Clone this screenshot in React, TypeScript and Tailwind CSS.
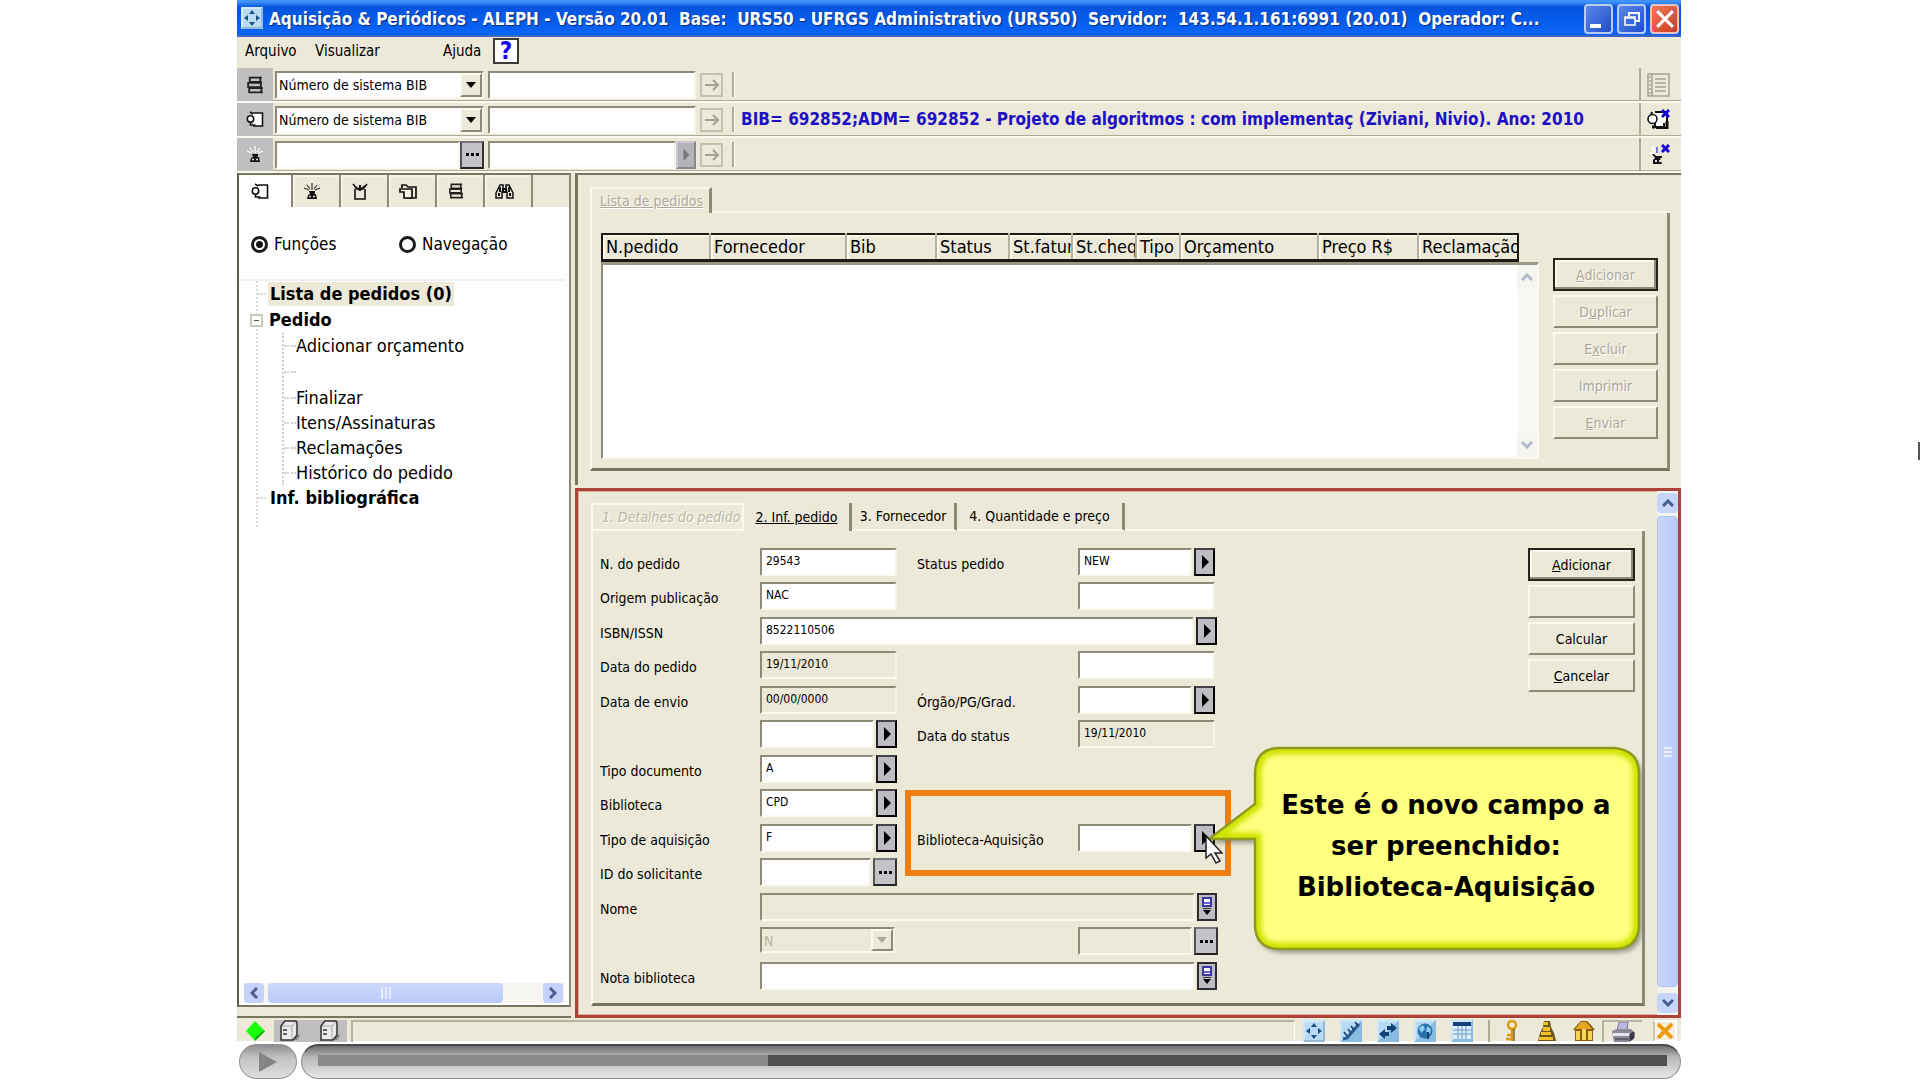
import { ReactNode } from "react";

const SUNKEN =
  "border-2 border-t-[#8d8a78] border-l-[#8d8a78] border-r-[#f6f4e6] border-b-[#fbfaf0]";
const RAISED =
  "border-2 border-t-[#fbfaee] border-l-[#fbfaee] border-r-[#8d8a78] border-b-[#8d8a78]";

const COLUMNS = [
  { name: "N.pedido", width: "w-[108px]" },
  { name: "Fornecedor", width: "w-[136px]" },
  { name: "Bib", width: "w-[90px]" },
  { name: "Status", width: "w-[73px]" },
  { name: "St.fatura", width: "w-[63px]" },
  { name: "St.cheque", width: "w-[64px]" },
  { name: "Tipo", width: "w-[44px]" },
  { name: "Orçamento", width: "w-[138px]" },
  { name: "Preço R$", width: "w-[100px]" },
  { name: "Reclamação", width: "w-[100px]" },
];

type IconProps = { className?: string };

function OrderIcon({ className = "h-[17px] w-[18px]" }: IconProps) {
  return (
    <svg viewBox="0 0 18 17" className={className} fill="none" stroke="#111" strokeWidth="1.6">
      <path d="M7 2h9.5v13H7" fill="#fff" />
      <path d="M4 1l3 2" />
      <circle cx="4.5" cy="8" r="3.2" fill="#fff" />
      <path d="M4.5 11v3h5" />
    </svg>
  );
}

function FlowerIcon({ className = "h-[17px] w-[18px]", petals = "#333" }: IconProps & { petals?: string }) {
  return (
    <svg viewBox="0 0 18 17" className={className} fill="none">
      <path d="M9 0v7M1 5l5 2M17 5l-5 2M4 2l3 4M14 2l-3 4" stroke={petals} strokeWidth="1.2" />
      <path d="M6 8h6v2l-1 1h2l1 5H4l1-4 2-1z" fill="#111" />
      <path d="M6 13.5h2M10 13.5h2" stroke="#ddd" strokeWidth="1.5" />
    </svg>
  );
}

function ParcelIcon() {
  return (
    <svg viewBox="0 0 16 17" className="h-[17px] w-4" fill="none" stroke="#111" strokeWidth="1.6">
      <path d="M3 6v10h10V6" />
      <path d="M1 1l4 5h6l4-5" />
      <path d="M3 4l5 3 5-4M8 2v4" strokeWidth="2" />
    </svg>
  );
}

function FolderIcon() {
  return (
    <svg viewBox="0 0 18 17" className="h-[17px] w-[18px]" fill="none" stroke="#111" strokeWidth="1.7">
      <path d="M3 5V2h4l2 2h8v11H7" />
      <path d="M1 6h12v9H5V9H1z" fill="#f4f2e4" />
    </svg>
  );
}

function BooksIcon({ className = "h-[17px] w-[17px]" }: IconProps) {
  return (
    <svg viewBox="0 0 17 17" className={className} fill="none" stroke="#222" strokeWidth="1.7">
      <path d="M15 1.5H3.500v4H15M13.5 2v3" />
      <path d="M15 6.5H2v4h13M14 7v3" />
      <path d="M16 11.5H3v4h13M14.5 12v3" />
    </svg>
  );
}

function BinocularsIcon() {
  return (
    <svg viewBox="0 0 19 17" className="h-[17px] w-[19px]" fill="none" stroke="#111" strokeWidth="1.5">
      <path d="M5 2h3v5l-1 2v6H1V10zM14 2h-3v5l1 2v6h6V10z" />
      <path d="M8 6h3v3H8zM5 4v5M14 4v5M4 10v3M15 10v3" strokeWidth="2" />
    </svg>
  );
}

function MoveIcon({ className = "h-[22px] w-[22px]" }: IconProps) {
  return (
    <svg viewBox="0 0 22 22" className={className}>
      <rect width="22" height="22" fill="#b9dcf4" />
      <path d="M1 21V1h20" stroke="#e7f6ff" fill="none" />
      <path d="M21 1v20H1" stroke="#6f97bd" fill="none" />
      <path d="M11 3l3 4H8zM11 19l3-4H8zM3 11l4-3v6zM19 11l-4-3v6z" fill="#1c4f83" />
    </svg>
  );
}

function BlueTile({ children }: { children: ReactNode }) {
  return (
    <svg viewBox="0 0 22 22" className="h-[22px] w-[22px] shrink-0">
      <rect width="22" height="22" fill="#b4daf4" />
      <path d="M22 0v22H0z" fill="#8abce2" />
      <path d="M1 21V1h20" stroke="#dff1fd" fill="none" />
      {children}
    </svg>
  );
}

function GoButton({ label }: { label: string }) {
  return (
    <button
      aria-label={label}
      className="flex h-6 w-[23px] items-center justify-center border-2 border-[#c3c0ae] bg-[#ebe9d9]"
    >
      <svg viewBox="0 0 16 14" className="h-[14px] w-4" fill="none" stroke="#a5a291" strokeWidth="2">
        <path d="M1 7h13M9 2l5 5-5 5" />
      </svg>
    </button>
  );
}

function ArrowButton({ label }: { label: string }) {
  return (
    <button
      aria-label={label}
      className="flex h-7 w-[21px] shrink-0 items-center justify-center border-2 border-t-[#44434a] border-l-[#222] border-r-black border-b-black bg-[#bdbcc2]"
    >
      <svg viewBox="0 0 8 14" className="h-[14px] w-2">
        <path d="M1 0l7 7-7 7z" fill="#000" />
      </svg>
    </button>
  );
}

function DotsButton({ label }: { label: string }) {
  return (
    <button
      aria-label={label}
      className="flex h-7 w-6 shrink-0 items-center justify-center gap-[2px] border-2 border-t-[#77767b] border-l-[#55545a] border-r-[#333] border-b-[#222] bg-[#c4c3c8]"
    >
      <span className="size-[3px] bg-black" />
      <span className="size-[3px] bg-black" />
      <span className="size-[3px] bg-black" />
    </button>
  );
}

function ExpandButton({ label }: { label: string }) {
  return (
    <button
      aria-label={label}
      className="flex h-7 w-5 shrink-0 items-center justify-center border-2 border-[#2c2b30] bg-[#bdbcc2]"
    >
      <svg viewBox="0 0 12 22" className="h-[22px] w-3">
        <rect x="2" y="2" width="8" height="8" fill="#fff" stroke="#3a35a8" strokeWidth="2" />
        <path d="M3 7h6" stroke="#6a63dd" strokeWidth="2" />
        <path d="M2 14h8l-4 5z" fill="#000" />
        <path d="M2 12.5h8" stroke="#333" />
      </svg>
    </button>
  );
}

function CommandButton({
  children,
  label,
  primary,
  disabled,
}: {
  children?: ReactNode;
  label?: string;
  primary?: boolean;
  disabled?: boolean;
}) {
  const edge = primary
    ? "border-2 border-[#25241d] shadow-[inset_-2px_-2px_0_#8d8a78,inset_2px_2px_0_#fbfaee]"
    : RAISED;
  return (
    <button
      aria-label={label}
      disabled={disabled}
      className={`h-[33px] w-full bg-[#ece9d8] text-sm leading-4 ${edge} ${
        disabled ? "text-[#aca899] [text-shadow:1px_1px_0_#fff]" : "text-black"
      }`}
    >
      {children}
    </button>
  );
}

type FieldProps = {
  id: string;
  label?: string;
  value?: string;
  readOnly?: boolean;
  button?: "arrow" | "dots" | "expand";
};

function Field({ id, label, value = "", readOnly, button }: FieldProps) {
  return (
    <>
      <label htmlFor={id} className="truncate pt-[6px] text-sm leading-5">
        {label}
      </label>
      <div className="flex h-7 gap-[2px]">
        <input
          id={id}
          aria-label={label ? undefined : id}
          defaultValue={value}
          readOnly={readOnly}
          className={`h-7 min-w-0 flex-1 px-1 pb-[2px] text-xs ${SUNKEN} ${
            readOnly ? "bg-[#ece9d8]" : "bg-white"
          }`}
        />
        {button === "arrow" && <ArrowButton label={`Abrir ${label ?? id}`} />}
        {button === "dots" && <DotsButton label={`Procurar ${label ?? id}`} />}
        {button === "expand" && <ExpandButton label={`Expandir ${label ?? id}`} />}
      </div>
    </>
  );
}

function Blank() {
  return (
    <>
      <span />
      <span />
    </>
  );
}

function TitleBar() {
  return (
    <header className="flex h-[37px] items-center border-b-2 border-[#3d62c8] bg-linear-to-b from-[#3f93fb] from-5% via-[#0553dd] via-20% to-[#0a66fa] pr-[2px] pl-1">
      <MoveIcon className="h-[22px] w-[22px] shrink-0" />
      <h1 className="ml-[6px] min-w-0 flex-1 truncate pt-[3px] text-[17px] leading-7 font-bold whitespace-pre text-white [text-shadow:1px_1px_1px_#0a2a80]">
        {"Aquisição & Periódicos - ALEPH - Versão 20.01  Base:  URS50 - UFRGS Administrativo (URS50)  Servidor:  143.54.1.161:6991 (20.01)  Operador: C..."}
      </h1>
      <div className="flex gap-1 pt-[2px]">
        <button aria-label="Minimizar" className="flex h-[30px] w-[29px] items-end rounded-sm border-2 border-[#b9cbf5] bg-linear-to-br from-[#5c88ea] to-[#1d4ccb] p-1">
          <span className="h-1 w-[11px] bg-white" />
        </button>
        <button aria-label="Restaurar" className="flex h-[30px] w-[29px] items-center justify-center rounded-sm border-2 border-[#b9cbf5] bg-linear-to-br from-[#5c88ea] to-[#1d4ccb]">
          <svg viewBox="0 0 16 16" className="size-4" fill="none" stroke="#fff" strokeWidth="1.6">
            <path d="M5 5V2h10v8h-4" strokeWidth="2" />
            <path d="M1 6h10v8H1zM1 7h10" />
          </svg>
        </button>
        <button aria-label="Fechar" className="flex h-[30px] w-[29px] items-center justify-center rounded-sm border-2 border-[#e9c4bf] bg-linear-to-br from-[#ec7a5e] to-[#cf3814]">
          <svg viewBox="0 0 16 16" className="size-[18px]" stroke="#fff" strokeWidth="2.6">
            <path d="M1 1l14 14M15 1L1 15" />
          </svg>
        </button>
      </div>
    </header>
  );
}

function SystemSelect({ id }: { id: string }) {
  return (
    <div className={`relative h-7 w-[209px] bg-white ${SUNKEN}`}>
      <select
        aria-label={id}
        className="h-full w-full appearance-none pl-[2px] text-sm leading-5"
      >
        <option>Número de sistema BIB</option>
      </select>
      <span className={`pointer-events-none absolute top-0 right-0 flex h-6 w-[22px] items-center justify-center bg-[#ece9d8] ${RAISED}`}>
        <svg viewBox="0 0 10 6" className="h-[6px] w-[10px]">
          <path d="M0 0h10L5 6z" />
        </svg>
      </span>
    </div>
  );
}

function SearchRow({
  icon,
  tail,
  children,
  message,
}: {
  icon: ReactNode;
  tail: ReactNode;
  children: ReactNode;
  message?: string;
}) {
  return (
    <div className="flex h-[35px] border-b-2 border-[#fbfaf0] shadow-[inset_0_-1px_0_#aeab99]">
      <div className="flex w-9 items-center justify-center bg-[#bfbfbf]">{icon}</div>
      <div className="flex items-center gap-1 pl-[2px]">{children}</div>
      <div className="my-1 ml-[9px] w-[3px] border-r border-l-2 border-r-white border-l-[#aeab99]" />
      <p className="min-w-0 flex-1 truncate pl-[6px] text-[17px] leading-8 font-bold text-[#1d10c4]">
        {message}
      </p>
      <div className="flex w-[42px] items-center border-l-2 border-[#aeab99] pl-[6px]">{tail}</div>
    </div>
  );
}

function Toolbar() {
  return (
    <div>
      <nav className="flex h-[31px] items-center pb-1 pl-2 text-[15px] leading-6">
        <a href="#arquivo" className="w-[70px]">Arquivo</a>
        <a href="#visualizar" className="w-32">Visualizar</a>
        <a href="#ajuda" className="w-[50px]">Ajuda</a>
        <button
          aria-label="Ajuda rápida"
          className="flex h-[26px] w-[26px] items-center justify-center border-2 border-[#3c3b35] bg-white text-2xl leading-none font-bold text-[#1505f0]"
        >
          ?
        </button>
      </nav>
      <SearchRow
        icon={<BooksIcon className="h-[18px] w-[18px]" />}
        tail={
          <svg viewBox="0 0 23 24" className="h-6 w-[23px]" fill="none" stroke="#a5a291" strokeWidth="1.5">
            <path d="M1 1h21v22H1zM5 1v22" />
            <path d="M2 4h2M2 8h2M2 12h2M2 16h2M2 20h2" />
            <path d="M8 6h11M8 10h11M8 14h11M8 18h11" />
          </svg>
        }
      >
        <SystemSelect id="Tipo de busca de item" />
        <input aria-label="Busca de item" className={`h-7 w-[208px] bg-white px-1 text-sm ${SUNKEN}`} />
        <GoButton label="Buscar item" />
      </SearchRow>
      <SearchRow
        icon={<OrderIcon />}
        message="BIB= 692852;ADM= 692852 - Projeto de algoritmos : com implementaç (Ziviani, Nivio). Ano: 2010"
        tail={
          <svg viewBox="0 0 23 22" className="h-[22px] w-[23px]" fill="none" stroke="#111" strokeWidth="2">
            <path d="M8 3h12v16H9" fill="#fff" />
            <path d="M5 3l-1 3M8 13v5h9M17 14v5" />
            <circle cx="5.5" cy="10" r="4.5" fill="#fff" strokeWidth="1.6" />
            <path d="M5 18h3M20 12v8" strokeWidth="3" />
            <path d="M15 1l7 7M22 1l-7 7" stroke="#1505d8" strokeWidth="3" />
          </svg>
        }
      >
        <SystemSelect id="Tipo de busca de pedido" />
        <input aria-label="Busca de pedido" className={`h-7 w-[208px] bg-white px-1 text-sm ${SUNKEN}`} />
        <GoButton label="Buscar pedido" />
      </SearchRow>
      <SearchRow
        icon={<FlowerIcon petals="#fff" />}
        tail={
          <svg viewBox="0 0 23 22" className="h-[22px] w-[23px]" fill="none" stroke="#111" strokeWidth="2">
            <path d="M5 3l3 5M3 9l5 1" stroke="#fff" />
            <path d="M10 3v6" stroke="#555ad0" strokeWidth="1.5" />
            <path d="M5 10h2l2 2h6v2h-2l2 6H6v-4l2-2z" fill="#111" stroke="none" />
            <path d="M8 17h2M12 17h2" stroke="#ddd" />
            <path d="M15 1l7 7M22 1l-7 7" stroke="#1505d8" strokeWidth="3" />
          </svg>
        }
      >
        <div className="flex w-[209px]">
          <input aria-label="Fornecedor" className={`h-7 min-w-0 flex-1 bg-white px-1 text-sm ${SUNKEN}`} />
          <DotsButton label="Procurar fornecedor" />
        </div>
        <div className="flex w-[208px]">
          <input aria-label="Assinatura" className={`h-7 min-w-0 flex-1 bg-white px-1 text-sm ${SUNKEN}`} />
          <button
            aria-label="Abrir assinatura"
            className="flex h-7 w-5 items-center justify-center border-2 border-t-[#c9c8cc] border-r-[#88878c] border-b-[#88878c] border-l-[#c9c8cc] bg-[#b4b3b9]"
          >
            <svg viewBox="0 0 8 14" className="h-3 w-2">
              <path d="M1 0l7 7-7 7z" fill="#77767c" />
            </svg>
          </button>
        </div>
        <GoButton label="Buscar fornecedor" />
      </SearchRow>
    </div>
  );
}

function TreeChild({ children }: { children: ReactNode }) {
  return (
    <li className="flex h-[25px] items-center whitespace-nowrap">
      <span className="w-3 border-t-2 border-dotted border-[#cfcec8]" />
      {children}
    </li>
  );
}

function Chevron({ turn }: { turn: string }) {
  return (
    <svg viewBox="0 0 12 8" className={`h-2 w-3 ${turn}`} fill="none" stroke="#4a5f91" strokeWidth="3">
      <path d="M1 7l5-5 5 5" />
    </svg>
  );
}

const TAB =
  "flex h-8 w-12 items-center justify-center border-r-2 border-[#8d8a78] pr-2 shadow-[inset_2px_2px_0_#f6f4e6]";

function Sidebar() {
  return (
    <aside className="flex w-[334px] shrink-0 flex-col border-b-2 border-[#77745f] pb-[9px]">
      <div className="flex min-h-0 flex-1 flex-col border-2 border-t-[#77745f] border-r-[#8d8a78] border-b-[#77745f] border-l-[#5f5d50]">
        <div role="tablist" className="flex bg-[#ece9d8]">
          <button role="tab" aria-label="Pedido" aria-selected="true" className="flex h-8 w-[54px] items-center border-r-2 border-[#8d8a78] bg-white pl-3">
            <OrderIcon />
          </button>
          <button role="tab" aria-label="Fornecedor" className={TAB}>
            <FlowerIcon />
          </button>
          <button role="tab" aria-label="Remessa" className={TAB}>
            <ParcelIcon />
          </button>
          <button role="tab" aria-label="Faturas" className={TAB}>
            <FolderIcon />
          </button>
          <button role="tab" aria-label="Itens" className={TAB}>
            <BooksIcon className="h-4 w-4" />
          </button>
          <button role="tab" aria-label="Procurar" className={TAB}>
            <BinocularsIcon />
          </button>
        </div>
        <div className="flex flex-1 flex-col bg-white">
          <div className="mr-1 flex h-[74px] items-center border-b-2 border-[#efefef] pt-[2px] pl-3 text-[17px] leading-6">
            <label className="flex w-[148px] items-center gap-[6px]">
              <input type="radio" name="modo" defaultChecked className="size-[17px] appearance-none rounded-full border-[3px] border-[#1c1c1c] bg-[radial-gradient(circle,#111_3px,#fff_4px)]" />
              Funções
            </label>
            <label className="flex items-center gap-[6px]">
              <input type="radio" name="modo" className="size-[17px] appearance-none rounded-full border-[3px] border-[#1c1c1c] bg-white" />
              Navegação
            </label>
          </div>
          <ul className="ml-[17px] border-l-2 border-dotted border-[#dcdcd8] pb-4 text-lg leading-6">
            <li className="flex h-[26px] items-center font-bold">
              <span className="mr-[2px] w-2 border-t-2 border-dotted border-[#dcdcd8]" />
              <span className="bg-[#ece9d8] px-[2px]">Lista de pedidos (0)</span>
            </li>
            <li>
              <div className="flex h-[26px] items-center gap-[6px] font-bold">
                <button aria-label="Recolher Pedido" className="relative -ml-2 flex size-[13px] items-center justify-center border-2 border-[#c9c8bf] bg-white">
                  <span className="h-[1px] w-[5px] bg-[#555]" />
                </button>
                Pedido
              </div>
              <ul className="ml-6 border-l-2 border-dotted border-[#cfcec8]">
                <TreeChild>Adicionar orçamento</TreeChild>
                <li className="flex h-[27px] items-center">
                  <span className="w-3 border-t-2 border-dotted border-[#cfcec8]" />
                </li>
                <TreeChild>Finalizar</TreeChild>
                <TreeChild>Itens/Assinaturas</TreeChild>
                <TreeChild>Reclamações</TreeChild>
                <TreeChild>Histórico do pedido</TreeChild>
              </ul>
            </li>
            <li className="flex h-[26px] items-center font-bold">
              <span className="mr-1 w-2 border-t-2 border-dotted border-[#dcdcd8]" />
              Inf. bibliográfica
            </li>
          </ul>
          <div className="mt-auto mr-1 mb-[2px] ml-[5px] flex h-5 gap-1 bg-[#f6f5ef] pr-[2px]">
            <button aria-label="Rolar para a esquerda" className="flex w-5 items-center justify-center rounded-sm bg-[#c5d3fa]">
              <Chevron turn="-rotate-90" />
            </button>
            <div className="flex w-[235px] items-center justify-center gap-[2px] rounded-sm bg-linear-to-b from-[#cdd9fb] to-[#b9cbf8]">
              <span className="h-3 w-[2px] bg-[#e6edff]" />
              <span className="h-3 w-[2px] bg-[#e6edff]" />
              <span className="h-3 w-[2px] bg-[#e6edff]" />
            </div>
            <button aria-label="Rolar para a direita" className="ml-auto flex w-5 items-center justify-center rounded-sm bg-[#c5d3fa]">
              <Chevron turn="rotate-90" />
            </button>
          </div>
        </div>
      </div>
    </aside>
  );
}

function OrderList() {
  return (
    <section className="flex h-[312px] flex-col border-t-2 border-l-[3px] border-[#77745f] pt-3 pr-[11px] pb-[14px] pl-3">
      <div className="flex h-[26px]">
        <button className="w-[122px] border-t-2 border-r-[3px] border-l-2 border-t-[#fbfaee] border-r-[#8d8a78] border-l-[#fbfaee] pl-2 text-left text-sm text-[#aca899] underline [text-shadow:1px_1px_0_#fff]">
          Lista de pedidos
        </button>
        <div className="flex-1 border-b-2 border-[#fbfaee]" />
      </div>
      <div className="flex flex-1 gap-[14px] border-r-[3px] border-b-[3px] border-l-2 border-r-[#8d8a78] border-b-[#77745f] border-l-[#fbfaee] pt-5 pr-[9px] pb-[9px] pl-[9px]">
        <div className="flex min-w-0 flex-1 flex-col">
          <table className="w-[917px] table-fixed border-2 border-b-[3px] border-[#1b1a15] text-lg leading-6">
            <thead>
              <tr>
                {COLUMNS.map((c) => (
                  <th
                    key={c.name}
                    scope="col"
                    className={`${c.width} h-[24px] overflow-hidden border-r-2 border-r-[#b5b2a0] pl-[3px] text-left font-normal whitespace-nowrap shadow-[inset_2px_2px_0_#fbfaee] last:border-r-0`}
                  >
                    {c.name}
                  </th>
                ))}
              </tr>
            </thead>
          </table>
          <div className="flex flex-1 justify-end border-t-[3px] border-r-2 border-b-2 border-l-2 border-t-[#9b9886] border-r-[#fbfaee] border-b-[#fbfaee] border-l-[#8d8a78] bg-white">
            <div className="flex w-5 flex-col items-center justify-between bg-[#f9f9f5]">
              <button aria-label="Rolar lista para cima" disabled className="flex h-6 w-full items-center justify-center bg-[#f0efe8] opacity-40">
                <Chevron turn="rotate-0" />
              </button>
              <button aria-label="Rolar lista para baixo" disabled className="flex h-6 w-full items-center justify-center bg-[#f0efe8] opacity-40">
                <Chevron turn="rotate-180" />
              </button>
            </div>
          </div>
        </div>
        <div className="flex w-[105px] flex-col gap-1 pt-[25px]">
          <CommandButton primary disabled><u>A</u>dicionar</CommandButton>
          <CommandButton disabled>D<u>u</u>plicar</CommandButton>
          <CommandButton disabled>E<u>x</u>cluir</CommandButton>
          <CommandButton disabled>Imprimir</CommandButton>
          <CommandButton disabled><u>E</u>nviar</CommandButton>
        </div>
      </div>
    </section>
  );
}

const BUBBLE =
  "M80 7H414Q439 9 439 33V183Q439 208 414 208H80Q55 208 55 183V98H9L55 63V33Q55 7 80 7Z";

function Callout() {
  return (
    <div className="absolute top-[250px] left-[622px] h-[220px] w-[450px]">
      <svg viewBox="0 0 450 220" className="absolute inset-0 h-full w-full">
        <defs>
          <filter id="glow" x="-10%" y="-10%" width="120%" height="120%">
            <feGaussianBlur stdDeviation="2.5" />
          </filter>
          <filter id="drop" x="-10%" y="-10%" width="120%" height="120%">
            <feGaussianBlur stdDeviation="2" />
          </filter>
          <clipPath id="bubble">
            <path d={BUBBLE} />
          </clipPath>
        </defs>
        <path d={BUBBLE} transform="translate(3 4)" fill="#6b6a60" opacity="0.6" filter="url(#drop)" />
        <g clipPath="url(#bubble)">
          <rect width="450" height="220" fill="#ffff80" />
          <path d={BUBBLE} fill="none" stroke="#cfe400" strokeWidth="13" filter="url(#glow)" />
        </g>
        <path d={BUBBLE} fill="none" stroke="#8f9a20" strokeWidth="2.5" />
      </svg>
      <p className="relative pt-11 pr-3 pl-[54px] text-center font-['DejaVu_Sans',sans-serif] text-[26px] leading-[41px] font-bold text-black">
        Este é o novo campo a
        <br />
        ser preenchido:
        <br />
        Biblioteca-Aquisição
      </p>
    </div>
  );
}

function OrderForm() {
  return (
    <section className="relative flex flex-1 border-[3px] border-[#ac4238] shadow-[inset_0_0_0_1px_#dcae9c]">
      <div className="flex flex-1 flex-col pt-3 pr-3 pb-[9px] pl-[13px]">
        <div className="flex h-7 text-sm leading-5">
          <button disabled className="w-[153px] border-2 border-[#fbfaee] pl-[9px] text-left text-[#b8b5a5] italic [text-shadow:1px_1px_0_#fff]">
            1. Detalhes do pedido
          </button>
          <button className="w-[108px] border-r-[3px] border-[#8d8a78] underline">2. Inf. pedido</button>
          <button className="w-[105px] border-r-[3px] border-b-2 border-r-[#8d8a78] border-b-[#fbfaee]">3. Fornecedor</button>
          <button className="w-[168px] border-r-[3px] border-b-2 border-r-[#8d8a78] border-b-[#fbfaee]">4. Quantidade e preço</button>
          <div className="flex-1 border-b-2 border-[#fbfaee]" />
        </div>
        <div className="flex flex-1 justify-between border-r-[3px] border-b-[3px] border-l-2 border-r-[#8d8a78] border-b-[#77745f] border-l-[#fbfaee] pt-[17px] pr-[7px] pb-[7px] pl-[7px]">
          <form className="grid auto-rows-fr grid-cols-[160px_137px_161px_137px] content-stretch">
            <Field id="pedido" label="N. do pedido" value="29543" />
            <div className="col-span-2 grid grid-cols-[161px_137px] pl-5">
              <Field id="status" label="Status pedido" value="NEW" button="arrow" />
            </div>
            <Field id="origem" label="Origem publicação" value="NAC" />
            <div className="col-span-2 grid grid-cols-[161px_137px] pl-5">
              <Field id="status2" />
            </div>
            <label htmlFor="isbn" className="pt-[6px] text-sm leading-5">ISBN/ISSN</label>
            <div className="col-span-3 -mr-[22px] flex h-7 gap-[2px]">
              <input id="isbn" defaultValue="8522110506" className={`h-7 flex-1 bg-white px-1 pb-[2px] text-xs ${SUNKEN}`} />
              <ArrowButton label="Abrir ISBN/ISSN" />
            </div>
            <Field id="data" label="Data do pedido" value="19/11/2010" readOnly />
            <div className="col-span-2 grid grid-cols-[161px_137px] pl-5">
              <Field id="data2" />
            </div>
            <Field id="envio" label="Data de envio" value="00/00/0000" readOnly />
            <div className="col-span-2 grid grid-cols-[161px_137px] pl-5">
              <Field id="orgao" label="Órgão/PG/Grad." button="arrow" />
            </div>
            <Field id="grupo" button="arrow" />
            <div className="col-span-2 grid grid-cols-[161px_137px] pl-5">
              <Field id="data-status" label="Data do status" value="19/11/2010" readOnly />
            </div>
            <Field id="tipo" label="Tipo documento" value="A" button="arrow" />
            <Blank />
            <Field id="biblioteca" label="Biblioteca" value="CPD" button="arrow" />
            <Blank />
            <Field id="aquisicao" label="Tipo de aquisição" value="F" button="arrow" />
            <div className="relative col-span-2 grid grid-cols-[161px_137px] pl-5">
              <span className="pointer-events-none absolute -top-[34px] -right-9 left-2 h-[86px] border-[6px] border-[#f07f12]" />
              <Field id="bib-aquisicao" label="Biblioteca-Aquisição" button="arrow" />
            </div>
            <Field id="solicitante" label="ID do solicitante" button="dots" />
            <Blank />
            <label htmlFor="nome" className="pt-[6px] text-sm leading-5">Nome</label>
            <div className="col-span-3 -mr-[22px] flex h-7 gap-[2px]">
              <input id="nome" readOnly className={`h-7 flex-1 bg-[#ece9d8] px-1 text-xs ${SUNKEN}`} />
              <ExpandButton label="Expandir Nome" />
            </div>
            <span />
            <div className={`relative h-[26px] w-[135px] ${SUNKEN}`}>
              <select disabled aria-label="Idioma" className="h-full w-full appearance-none pl-[2px] text-sm leading-5 text-[#b5b2a0] opacity-100">
                <option>N</option>
              </select>
              <span className={`pointer-events-none absolute top-0 right-0 flex h-[22px] w-[22px] items-center justify-center bg-[#ece9d8] ${RAISED}`}>
                <svg viewBox="0 0 10 6" className="h-[6px] w-[10px]">
                  <path d="M0 0h10L5 6z" fill="#aca899" />
                </svg>
              </span>
            </div>
            <div className="col-span-2 grid grid-cols-[161px_140px] pl-5">
              <Field id="complemento" readOnly button="dots" />
            </div>
            <label htmlFor="nota" className="pt-[6px] text-sm leading-5">Nota biblioteca</label>
            <div className="col-span-3 -mr-[22px] flex h-7 gap-[2px]">
              <input id="nota" className={`h-7 flex-1 bg-white px-1 text-xs ${SUNKEN}`} />
              <ExpandButton label="Expandir Nota biblioteca" />
            </div>
          </form>
          <div className="flex w-[107px] flex-col gap-1">
            <CommandButton primary><u>A</u>dicionar</CommandButton>
            <CommandButton label="Sem ação" />
            <CommandButton>Calcular</CommandButton>
            <CommandButton><u>C</u>ancelar</CommandButton>
          </div>
        </div>
      </div>
      <div className="flex w-[21px] flex-col gap-[3px] bg-[#f4f3ee] pt-[2px] pb-[2px]">
        <button aria-label="Rolar para cima" className="flex h-5 items-center justify-center rounded-sm bg-[#c8d5fb]">
          <Chevron turn="rotate-0" />
        </button>
        <div className="flex flex-1 flex-col items-center justify-center gap-[2px] rounded-sm border border-[#b0c2ee] bg-linear-to-r from-[#cad7fc] to-[#b8cbf8]">
          <span className="h-[2px] w-2 bg-[#eef3ff]" />
          <span className="h-[2px] w-2 bg-[#eef3ff]" />
          <span className="h-[2px] w-2 bg-[#eef3ff]" />
        </div>
        <button aria-label="Rolar para baixo" className="mt-[3px] flex h-5 items-center justify-center rounded-sm bg-[#c8d5fb]">
          <Chevron turn="rotate-180" />
        </button>
      </div>
      <Callout />
      <svg viewBox="0 0 18 30" className="absolute top-[344px] left-[627px] h-[30px] w-[18px]" fill="#fff" stroke="#222" strokeWidth="1.5">
        <path d="M1 1v22l5-4 5 9 4-2-5-8h7z" />
      </svg>
    </section>
  );
}

function ServerIcon() {
  return (
    <svg viewBox="0 0 22 21" className="h-[21px] w-[22px]" stroke="#333" strokeWidth="1.5">
      <path d="M14 17l7-3-4 6H9z" fill="#808080" stroke="none" />
      <path d="M1 6l4-5h11l1 2v12l-4 5H1z" fill="#e9e9e9" />
      <path d="M2 6h10l4-4M12 6v13" stroke="#aaa" strokeWidth="1" fill="none" />
      <path d="M3 10h4M3 14h4" fill="none" />
    </svg>
  );
}

function StatusBar() {
  return (
    <div className="flex h-6 items-center border-b border-white pt-[2px]">
      <svg viewBox="0 0 20 20" className="ml-[9px] size-5">
        <path d="M9 0l10 10L9 20 0 10z" fill="#1aff0c" />
        <path d="M19 10L9 20v-3l8-7z" fill="#139c10" />
      </svg>
      <div className="ml-2 flex h-[22px] w-[73px] items-center gap-[18px] bg-[#bfbfbf] pl-[6px]">
        <ServerIcon />
        <ServerIcon />
      </div>
      <div className="ml-1 h-[22px] flex-1 border-t-2 border-r border-l-2 border-t-[#b5b2a0] border-r-white border-l-[#b5b2a0]" />
      <div className="ml-2 flex items-center gap-[15px]">
        <MoveIcon />
        <BlueTile>
          <path d="M3 19l4-1L19 4" stroke="#2b5c8f" strokeWidth="3" fill="none" />
          <path d="M4 12l3 4M8 9l3 4M11 6l3 4M15 2l3 4" stroke="#173f6b" strokeWidth="1.5" />
        </BlueTile>
        <BlueTile>
          <path d="M2 14l6-5v3h4v4H8v3zM20 8l-6-5v3h-4v4h4v3z" fill="#123f74" />
        </BlueTile>
        <BlueTile>
          <circle cx="11" cy="11" r="7.5" fill="#2a6fa8" />
          <path d="M5 8l4-3 2 4-4 4zM13 6l4 3-1 5-4-2z" fill="#8fd0ee" />
          <path d="M14 12v7" stroke="#123f74" strokeWidth="2" />
        </BlueTile>
        <BlueTile>
          <rect x="2" y="2" width="18" height="4" fill="#163f7a" />
          <rect x="2" y="6" width="18" height="13" fill="#d9edfb" />
          <path d="M2 10h18M2 14h18M7 6v13M11 6v13M15 6v13" stroke="#6f9cc8" />
        </BlueTile>
      </div>
      <div className="ml-[14px] h-[22px] w-[3px] border-r-2 border-[#aeab99]" />
      <svg viewBox="0 0 14 22" className="ml-[14px] h-[22px] w-[14px]" fill="none" stroke="#d89a10" strokeWidth="2.5">
        <circle cx="8" cy="5" r="4" />
        <path d="M8 9v12M8 15H3M8 19H2" />
        <path d="M10 9v12" stroke="#3c2b05" strokeWidth="1" />
      </svg>
      <svg viewBox="0 0 18 22" className="ml-5 h-[22px] w-[18px]">
        <path d="M6 1h6l1 6 3 6 2 8H0l2-8 3-6z" fill="#6b551a" />
        <path d="M6 2h4v3H6zM5 7h7v4H5zM3 12h10v3H3zM1 17h14v3H1z" fill="#f2c02a" />
      </svg>
      <svg viewBox="0 0 24 22" className="ml-4 h-[22px] w-6">
        <path d="M9 1h6l4 4 4 5h-2v11H3V10H1l4-5z" fill="#8a5f0c" />
        <path d="M9 2h5l6 7H3z" fill="#e6a922" />
        <path d="M4 11h4v9H4zM10 9h4v11h-4zM16 11h4v9h-4z" fill="#f7d45c" />
      </svg>
      <div className="ml-[6px] flex h-[22px] w-10 justify-center border-t-2 border-l-2 border-[#b5b2a0]">
        <svg viewBox="0 0 24 21" className="h-[21px] w-6">
          <path d="M8 0h9l-1 9H6z" fill="#b9b7dc" stroke="#77759a" />
          <path d="M1 9l5-2h14l3 3v6l-5 4H3z" fill="#8a8996" />
          <path d="M2 11h17v3H2z" fill="#e6e6ee" />
          <path d="M19 12l4-2v6l-4 3zM4 17h13" fill="#3b3a44" stroke="#33323c" />
        </svg>
      </div>
      <button aria-label="Sair" className="mr-1 ml-[11px] flex h-[22px] w-6 items-center justify-center border-2 border-t-white border-r-white border-b-white border-l-[#c9c6b4] bg-[#f6f1df]">
        <svg viewBox="0 0 16 16" className="size-4" stroke="#f09a12" strokeWidth="4">
          <path d="M1 1l14 14M15 1L1 15" />
        </svg>
      </button>
    </div>
  );
}

function Player() {
  return (
    <footer className="flex h-[38px] gap-1 bg-white pt-[2px] pb-px pl-[2px]">
      <button
        aria-label="Reproduzir"
        className="flex w-[58px] items-center justify-center rounded-full border border-[#8c8c8c] bg-linear-to-b from-[#8f8f8f] via-[#c4c4c4] via-40% to-[#dedede]"
      >
        <svg viewBox="0 0 18 20" className="h-5 w-[18px]">
          <path d="M0 0l18 10L0 20z" fill="#858585" />
        </svg>
      </button>
      <div className="flex-1 rounded-full border border-t-2 border-[#8c8c8c] border-t-[#4a4a4a] bg-linear-to-b from-[#707070] via-[#b8b8b8] via-35% to-[#e8e8e8] pt-[9px] pr-[13px] pl-4">
        <div className="h-[11px] bg-[#505050]">
          <div className="h-full w-1/3 bg-[#8a8a8a]" />
        </div>
      </div>
    </footer>
  );
}

export default function App() {
  return (
    <div className="relative min-h-screen bg-white pr-[239px] pl-[237px] font-['DejaVu_Sans_Condensed','DejaVu_Sans',sans-serif] text-black">
      <div className="flex min-h-screen flex-col bg-[#ece9d8]">
        <TitleBar />
        <Toolbar />
        <main className="flex flex-1 gap-1">
          <Sidebar />
          <div className="flex min-w-0 flex-1 flex-col gap-[3px]">
            <OrderList />
            <OrderForm />
          </div>
        </main>
        <StatusBar />
        <Player />
      </div>
      {/* handle of the collapsed side drawer */}
      <span className="absolute top-[442px] right-0 h-[18px] w-[2px] bg-[#555]" />
    </div>
  );
}
